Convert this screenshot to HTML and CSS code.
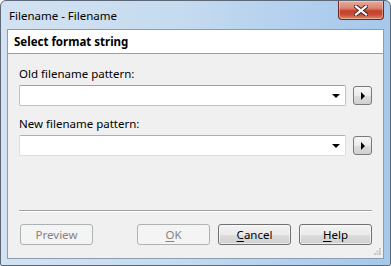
FILE: index.html
```html
<!DOCTYPE html>
<html>
<head>
<meta charset="utf-8">
<link rel="stylesheet" href="styles.css">
</head>
<body>
<div class="window">
  <div class="titlebar">
    <span class="title">Filename - Filename</span>
    <div class="close">
      <svg width="14" height="11" viewBox="0 0 14 11"><path d="M2 1.5 L12 9.5 M12 1.5 L2 9.5" stroke="#4a2a26" stroke-width="4.2" stroke-linecap="square"/><path d="M2 1.5 L12 9.5 M12 1.5 L2 9.5" stroke="#ffffff" stroke-width="2.2" stroke-linecap="square"/></svg>
    </div>
  </div>
  <div class="client">
    <div class="header">Select format string</div>
    <div class="content">
      <div class="label">Old filename pattern:</div>
      <div class="row">
        <div class="combo combo-hot"><span class="arrow"></span></div>
        <div class="mini"><span class="tri"></span></div>
      </div>
      <div class="label label2">New filename pattern:</div>
      <div class="row">
        <div class="combo"><span class="arrow"></span></div>
        <div class="mini"><span class="tri"></span></div>
      </div>
      <div class="spacer"></div>
      <div class="sep"></div>
      <div class="buttons">
        <div class="btn disabled preview">Preview</div>
        <div class="grow"></div>
        <div class="btn disabled"><u>O</u>K</div>
        <div class="btn"><u>C</u>ancel</div>
        <div class="btn"><u>H</u>elp</div>
      </div>
    </div>
    <svg class="grip" width="7" height="7" viewBox="0 0 7 7">
      <rect x="5" y="0" width="2" height="2" fill="#c4c8cc"/>
      <rect x="2.5" y="2.5" width="2" height="2" fill="#c4c8cc"/>
      <rect x="5" y="2.5" width="2" height="2" fill="#c4c8cc"/>
      <rect x="0" y="5" width="2" height="2" fill="#c4c8cc"/>
      <rect x="2.5" y="5" width="2" height="2" fill="#c4c8cc"/>
      <rect x="5" y="5" width="2" height="2" fill="#c4c8cc"/>
    </svg>
  </div>
</div>
</body>
</html>
```
FILE: styles.css
```css
html, body {
  margin: 0;
  padding: 0;
  background: #ffffff;
}
.window {
  width: 391px;
  height: 266px;
  box-sizing: border-box;
  border: 1px solid #5b6878;
  border-radius: 6px 6px 2px 2px;
  background: linear-gradient(to right, #d3e2f1 0%, #c6dbef 45%, #b3d0ee 75%, #a6c8ea 100%);
  display: flex;
  flex-direction: column;
  font-family: "Noto Sans", "Open Sans", sans-serif;
  font-size: 11.5px;
  color: #000;
  overflow: hidden;
}
.titlebar {
  height: 28px;
  display: flex;
  align-items: flex-start;
  justify-content: space-between;
  padding: 0 6px 0 8px;
}
.title {
  margin-top: 7px;
  font-size: 11.5px;
  line-height: 16px;
  color: #000;
}
.close {
  width: 44px;
  height: 18px;
  border: 1px solid #6b2a22;
  border-top: none;
  border-radius: 0 0 4px 4px;
  background: linear-gradient(to bottom, #e9a99b 0%, #d98471 40%, #c4412c 55%, #c94b33 75%, #dd8a68 100%);
  display: flex;
  align-items: center;
  justify-content: center;
  box-shadow: inset 0 0 0 1px rgba(255,255,255,0.35);
}
.close svg {
  display: block;
}
.client {
  flex: 1;
  margin: 0 6px 6px 6px;
  border: 1px solid #8b9db1;
  background: #f0f0f0;
  display: flex;
  flex-direction: column;
  position: relative;
}
.header {
  height: 23px;
  background: #ffffff;
  border-bottom: 1px solid #a0a0a0;
  font-weight: bold;
  font-size: 11.5px;
  line-height: 24px;
  padding-left: 6px;
}
.content {
  flex: 1;
  display: flex;
  flex-direction: column;
  padding: 12px 10px 13px 11px;
}
.label {
  height: 15px;
  line-height: 15px;
  margin-bottom: 4px;
}
.label2 {
  margin-top: 10px;
}
.row {
  display: flex;
  align-items: flex-start;
  gap: 7px;
}
.combo {
  width: 327px;
  height: 21px;
  box-sizing: border-box;
  background: #ffffff;
  border: 1px solid #dadde2;
  border-top-color: #abadb3;
  border-radius: 2px;
  position: relative;
  display: flex;
  align-items: center;
  justify-content: flex-end;
  padding-right: 5px;
}
.combo-hot {
  border-color: #a9c6e2;
  border-top-color: #7ea4c9;
}
.arrow {
  width: 0;
  height: 0;
  border-left: 4px solid transparent;
  border-right: 4px solid transparent;
  border-top: 4px solid #000;
}
.mini {
  width: 19px;
  height: 19px;
  box-sizing: border-box;
  margin-top: 1px;
  border: 1px solid #7a7a7a;
  border-radius: 3px;
  background: linear-gradient(to bottom, #f6f6f6 0%, #ebebeb 50%, #dddddd 51%, #d0d0d0 100%);
  display: flex;
  align-items: center;
  justify-content: center;
}
.tri {
  width: 0;
  height: 0;
  border-top: 4px solid transparent;
  border-bottom: 4px solid transparent;
  border-left: 4px solid #000;
  margin-left: 1px;
}
.spacer {
  flex: 1;
}
.sep {
  height: 0;
  border-top: 1px solid #a0a0a0;
  border-bottom: 1px solid #ffffff;
  margin-right: 1px;
}
.buttons {
  display: flex;
  gap: 8px;
  margin-top: 12px;
  padding-right: 1px;
}
.grow {
  flex: 1;
}
.btn {
  width: 73px;
  height: 21px;
  box-sizing: border-box;
  border: 1px solid #707070;
  border-radius: 3px;
  background: linear-gradient(to bottom, #f2f2f2 0%, #ebebeb 50%, #dddddd 51%, #cfcfcf 100%);
  box-shadow: inset 0 0 0 1px rgba(255,255,255,0.6);
  text-align: center;
  line-height: 19px;
  color: #000;
}
.btn u {
  text-decoration: underline;
  text-underline-offset: 2px;
}
.btn.disabled {
  border-color: #adb2b5;
  background: #f4f4f4;
  box-shadow: none;
  color: #838383;
}
.preview {
  margin-left: 1px;
}
.grip {
  position: absolute;
  right: 2px;
  bottom: 3px;
}
```
